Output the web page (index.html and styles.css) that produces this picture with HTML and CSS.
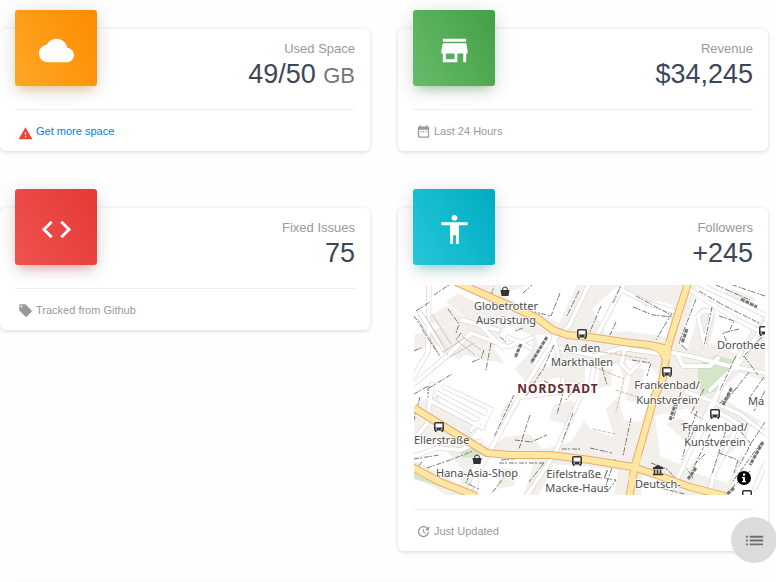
FILE: index.html
```html
<!DOCTYPE html>
<html lang="en">
<head>
<meta charset="utf-8">
<meta name="viewport" content="width=device-width, initial-scale=1">
<title>Dashboard</title>
<link rel="stylesheet" href="styles.css">
</head>
<body>
<main class="page">
  <div class="cards">
    <article class="card">
      <header class="card-header">
        <div class="tile tile-orange">
          <svg class="tile-icon" viewBox="0 0 24 24" aria-hidden="true"><path d="M19.35 10.04C18.67 6.59 15.64 4 12 4 9.11 4 6.6 5.64 5.35 8.04 2.34 8.36 0 10.91 0 14c0 3.31 2.69 6 6 6h13c2.76 0 5-2.24 5-5 0-2.64-2.05-4.78-4.65-4.96z"/></svg>
        </div>
        <div class="stat">
          <p class="category">Used Space</p>
          <h3 class="value">49/50 <small>GB</small></h3>
        </div>
      </header>
      <footer class="card-footer">
        <svg class="foot-icon warning" viewBox="0 0 24 24" aria-hidden="true"><path d="M1 21h22L12 2 1 21zm12-3h-2v-2h2v2zm0-4h-2v-4h2v4z"/></svg>
        <a href="#space">Get more space</a>
      </footer>
    </article>

    <article class="card">
      <header class="card-header">
        <div class="tile tile-green">
          <svg class="tile-icon" viewBox="0 0 24 24" aria-hidden="true"><path d="M20 4H4v2h16V4zm1 10v-2l-1-5H4l-1 5v2h1v6h10v-6h4v6h2v-6h1zm-9 4H6v-4h6v4z"/></svg>
        </div>
        <div class="stat">
          <p class="category">Revenue</p>
          <h3 class="value">$34,245</h3>
        </div>
      </header>
      <footer class="card-footer">
        <svg class="foot-icon" viewBox="0 0 24 24" aria-hidden="true"><path d="M9 11H7v2h2v-2zm4 0h-2v2h2v-2zm4 0h-2v2h2v-2zm2-7h-1V2h-2v2H8V2H6v2H5c-1.11 0-1.99.9-1.99 2L3 20c0 1.1.89 2 2 2h14c1.1 0 2-.9 2-2V6c0-1.1-.9-2-2-2zm0 16H5V9h14v11z"/></svg>
        <span>Last 24 Hours</span>
      </footer>
    </article>

    <article class="card">
      <header class="card-header">
        <div class="tile tile-red">
          <svg class="tile-icon" viewBox="0 0 24 24" aria-hidden="true"><path d="M9.4 16.6L4.8 12l4.600-4.600L8 6l-6 6 6 6 1.400-1.400zm5.200 0l4.600-4.600-4.600-4.600L16 6l6 6-6 6-1.400-1.400z"/></svg>
        </div>
        <div class="stat">
          <p class="category">Fixed Issues</p>
          <h3 class="value">75</h3>
        </div>
      </header>
      <footer class="card-footer">
        <svg class="foot-icon" viewBox="0 0 24 24" aria-hidden="true"><path d="M21.410 11.580l-9-9C12.050 2.220 11.550 2 11 2H4c-1.100 0-2 .9-2 2v7c0 .55.22 1.050.59 1.420l9 9c.36.36.86.58 1.410.58.55 0 1.050-.22 1.410-.59l7-7c.37-.36.59-.86.59-1.410 0-.55-.23-1.060-.59-1.420zM5.500 7C4.670 7 4 6.330 4 5.500S4.670 4 5.500 4 7 4.670 7 5.500 6.330 7 5.500 7z"/></svg>
        <span>Tracked from Github</span>
      </footer>
    </article>

    <article class="card">
      <header class="card-header">
        <div class="tile tile-cyan">
          <svg class="tile-icon" viewBox="0 0 24 24" aria-hidden="true"><path d="M12 2c1.100 0 2 .9 2 2s-.9 2-2 2-2-.9-2-2 .9-2 2-2zm9 7h-6v13h-2v-6h-2v6H9V9H3V7h18v2z"/></svg>
        </div>
        <div class="stat">
          <p class="category">Followers</p>
          <h3 class="value">+245</h3>
        </div>
      </header>
      <div class="map-frame">
        <svg class="map" viewBox="0 0 351 210" role="img" aria-label="Street map of Nordstadt">
          <defs>
            <g id="bus"><path d="M-3.500-5h7q1.500 0 1.500 1.500v7h-1V5H2.500V3.500h-5V5H-4V3.500h-1v-7Q-5-5-3.500-5z" fill="#333"/><path d="M-3.500-3.500h7V.5h-7z" fill="#fff"/><path d="M-3.500 1.500h1.500v1h-1.500zM2 1.500h1.500v1H2z" fill="#fff"/></g>
            <g id="basket"><path d="M-4.500-1h9L3.500 5h-7z" fill="#333"/><path d="M-2.500-1q0-3 2.500-3t2.500 3" fill="none" stroke="#333"/></g>
            <path id="streets" d="M175-1l-20 42-14 12-31 50-35 65-23 43M6 28l28 42 23-22 37 14 24-9M34 70L0 99M84 45L48 35M65 39l23 23M94 52l23 11M139 47l6 28M210-1l-28 53M208 5l28 14 23 7M285-1l66 31M275 4l16 11 29 18 31 16M255 67l26 5 34 9 36 7M264 71l5 10h27l8-8M291 62l-7-31q6-8 14-4l-8 31M327 67l-31 54-28 63-13 26M351 38l-24 38-31 29M351 148l-25-19-33-15-21-7M310 92l-15 39-12 25M166 113l-25 55-25 38-4 5M0 171l24-8 23 2 19-9M73 168l-10 22-2 20M146 63l35 8 27-8 39 6M211 63l-4 16 9 9 8-8M15-1L14 67 0 91M18 99l-5 40L0 154M15 115l54 28M23 108l47 25-13 12M30 102l47 22-9 18M41 148l12 5M117 100l-9 12 39-5 2-13M323 142l-23 47-5 21M351 180l-10 23M306 128l24 14M180 82l-4 23"/>
          </defs>
          <rect width="351" height="210" fill="#f3f0ec"/>

          <!-- open ground and blocks -->
          <g fill="#fff">
            <path d="M0 0h40l32 15-14 10-16 14-32 8-10 3z"/>
            <path d="M88 10l25-10h50l-18 38-24-12z"/>
            <path d="M0 66l25-6 14 10 9 8-15 28-33 14z"/>
            <path d="M50 70l47 10 18 20 30-8 10 22-18 28-10 12-26-11-23 20-20-11 16-19-39-18-8-20z"/>
            <path d="M92 40l25 10 2 14-22 24-17-25z"/>
            <path d="M122 50l18 0 5 8-10 24-17 2 7-18z"/>
            <path d="M178 24l24-22 20 8 9 12 13-6 15 4-5 32-42-6-20 2z"/>
            <path d="M283 0h68v30l-15 16-11 24-29-12 6-28-15-8-13 41-8-4z"/>
            <path d="M300 42l16-6 13 9-4 14-14-3z"/>
            <path d="M171 76l35 4 5 24-19 20 8 28-24-8-14-22 9-24z"/>
            <path d="M211 75l25 4 8 12-16 46-18-2-7-29 12-18z"/>
            <path d="M120 112l46-5 8 22-17 28-28 7-13-15-24 3z"/>
            <path d="M78 126l26-22 10 14-22 30-13 8z"/>
            <path d="M241 131l34-8 16 10-2 30-14 20-29-12z"/>
            <path d="M303 108l23-20 25 8v42l-28-16z"/>
            <path d="M289 132l29 0 16 22-20 44-33-10z"/>
            <path d="M66 170l54 6-10 34H65l-9-22z"/>
            <path d="M0 155l34 12 16 20-5 12-45-24z"/>
            <path d="M140 179l64 6-4 25h-75z"/>
            <path d="M228 190l28 9 6 11h-35z"/>
            <path d="M335 143l16-8v75h-33z"/>
            <path d="M0 192l23 12 8 6H0z"/>
            <path d="M24 104l18-14 46 8 10 12-22 34-50-24z"/>
          </g>
          <g fill="#f3f0ec">
            <path d="M11 35l22-15 20 15-25 7zM44 8l24 13-16 12-20-16zM94 116l12 2-11 17-10-4zM185 83l14 1-2 17-13 2zM218 82l13 2-7 34-12-3zM139 120l18-5 8 9-13 15-17-4zM304 10l14-6 24 9-7 12zM308 151l13-3 3 13-17 16zM252 139l15-6 13 7-10 15zM88 183l16 1-4 17-18 3z"/>
          </g>

          <!-- green spaces -->
          <g fill="#d3e6c8">
            <path d="M292 83l13-6 10 7-8 21-19 5-2-7zM300 70l20 5-11 21-17-11z"/>
            <path d="M45 162l19-3 9 8-12 5-13 1zM0 185l32 18-32-9zM284 80l12-7 0 22-12 5z"/>
          </g>

          <!-- minor streets -->
          <g fill="none" stroke-linecap="round" stroke-linejoin="round">
            <use href="#streets" stroke="#cfcdca" stroke-width="5"/>
            <use href="#streets" stroke="#fff" stroke-width="4"/>
            <path d="M4 34l22 37M12 32l22 38M18 29l19 30M42 55l19 15M49 52l18 13M29 67l22-14M36 72l24-14" stroke="#c7c5c3"/>
            <path d="M181 66l52 8M180 82l30 12-8 33M179 144l22 5M202 105l28 9" stroke="#d9b9a5" stroke-dasharray="3 2"/>
          </g>

          <!-- building edges -->
          <g class="edges">
            <path d="M2 26l14-9M20 10l15-10M0 31l9 13M8 44l17 26M0 66l9-4M34 24l11 15-3 9M47 48l-6 8M58 77l10-4M70 65l-3 9M0 109l14-8M14 101v11M77 58l-5 27M86 52l6 5M109 43l-8 3M77 11l3-10M109 8l9-8M146 8l-9 23-16-4M165 6l-12 25M140 60l-12 27M127 87l-15 24M100 110l-20 42M116 130l-11 34M130 96l20 9-7 24M101 155l16 2 16-7M148 164l20 0M87 175l45-4M85 178h46M94 187l-16 21M130 178l-15 19M0 174l25-4M13 183l23-8 23-9M34 185l-12 9 12 5M8 177l-7 8M55 191l-3 7 13 6M187 21l-12 28M176 51l36 4 34 4M202 37l-6 13M199 18l8-17M219 22l20 8 19 2M222 11l35 19M258 28l-16 27M218 75l19 3-4 13M176 163l22 5M217 133l-8 38M235 123l-12 47"/>
            <path d="M282 14l-17 44 8 7M298 22l-8 40M305 31l15 5-6 13M325 44l-16 4 5 12M285 6l24 14 38 19M302 0l34 15M351 11l-35-12M348 52l-19 20M322 71l-16 34M335 87l-26 33M350 92l-14 20M324 102l-19 17M351 106l-11 20M267 107l-8 28M290 104l-13 24 12 6M283 126l-10 29-5 20M296 149l-18 37M312 145l-14 44M327 147l10 12-12 22M347 158l-28 38M336 186l-18 17M237 178l16 6 11 12M222 198l-9 12M246 203l25 6M279 193l-6-9M305 168l19 7-4 13M267 139l15 2-7 14M351 137l-17 26M201 174l-10 29M180 192l22 3-9 12M291 169l-9 9M330 71l14 19M6 112l-6 23M15 103l23-14M159 128l-11 29M188 82l5 18M165 98l-13 17"/>
          </g>
          <g fill="none" stroke="#777" stroke-width="3" stroke-dasharray="4 1">
            <path d="M107 59l-6 14M133 52l-16 26M273 44l-5 14M262 117l-6 18M349 157l-13 23M320 203l-8 7M309 120l9-18M282 183l-8 11M327 14l16 8"/>
          </g>

          <!-- main roads -->
          <g fill="none" stroke-linejoin="round">
            <g stroke="#e6ad72" stroke-width="8">
              <path d="M42-3L76 12l23 10 24 11 16 12 14 5 23 2 33 5 27 3 18 4"/>
              <path d="M0 123l39 24 34 21 23 2h40l40 5 43 7 24 8 33 12 35 9M-2 182l28 15 36 14"/>
              <path d="M274-2l-15 47-5 17-6 35-7 13-15 53-5 17-6 34"/>
            </g>
            <g stroke="#ffe7a1" stroke-width="6">
              <path d="M42-3L76 12l23 10 24 11 16 12 14 5 23 2 33 5 27 3 18 4"/>
              <path d="M0 123l39 24 34 21 23 2h40l40 5 43 7 24 8 33 12 35 9M-2 182l28 15 36 14"/>
              <path d="M274-2l-15 47-5 17-6 35-7 13-15 53-5 17-6 34"/>
            </g>
            <path d="M236 62q12 3 14 13" stroke="#e6ad72" stroke-width="4"/>
            <path d="M236 61q12 3 16 14M254 56v18M225 169q-1 10-9 27" stroke="#ffe7a1" stroke-width="5"/>
          </g>

          <!-- points of interest -->
          <use href="#basket" x="91" y="6"/>
          <use href="#basket" x="63" y="174"/>
          <use href="#bus" x="168" y="49"/>
          <use href="#bus" x="253" y="87"/>
          <use href="#bus" x="301" y="129"/>
          <use href="#bus" x="25" y="142"/>
          <use href="#bus" x="163" y="176"/>
          <use href="#bus" x="350" y="46"/>
          <use href="#bus" x="333" y="210"/>
          <path d="M244 180l5 3v1h-10v-1zM240 185h1v4h-1zM243 185h1v4h-1zM246 185h1v4h-1zM239 189h10v1h-10z" fill="#333" stroke="#333" stroke-width=".5"/>

          <g class="labels">
            <text x="92" y="25">Globetrotter</text>
            <text x="92" y="39">Ausrüstung</text>
            <text x="168" y="67">An den</text>
            <text x="168" y="81">Markthallen</text>
            <text x="253" y="104">Frankenbad/</text>
            <text x="253" y="119">Kunstverein</text>
            <text x="301" y="146">Frankenbad/</text>
            <text x="301" y="161">Kunstverein</text>
            <text x="334" y="120" class="from-left">Ma</text>
            <text x="303" y="64" class="from-left">Dorothee</text>
            <text x="0" y="159" class="from-left">Ellerstraße</text>
            <text x="63" y="192">Hana-Asia-Shop</text>
            <text x="163" y="193">Eifelstraße /</text>
            <text x="163" y="207">Macke-Haus</text>
            <text x="244" y="203">Deutsch-</text>
            <text x="144" y="108" class="district">NORDSTADT</text>
          </g>
          <circle cx="330" cy="193" r="7"/>
          <path d="M328.500 192h2.500v4h1v1.200h-4V196h1v-2.800h-1V192zM329 188.500h2.200v2.200H329z" fill="#fff"/>
        </svg>
      </div>
      <footer class="card-footer">
        <svg class="foot-icon" viewBox="0 0 24 24" aria-hidden="true"><path d="M21 10.120h-6.780l2.740-2.820c-2.730-2.700-7.150-2.800-9.880-.1-2.730 2.710-2.730 7.080 0 9.790 2.730 2.710 7.150 2.710 9.880 0C18.320 15.650 19 14.080 19 12.100h2c0 1.980-.88 4.550-2.640 6.290-3.510 3.480-9.210 3.480-12.720 0-3.500-3.470-3.530-9.110-.02-12.580 3.510-3.470 9.140-3.470 12.650 0L21 3v7.120zM12.500 8v4.250l3.500 2.080-.72 1.210L11 13V8h1.500z"/></svg>
        <span>Just Updated</span>
      </footer>
    </article>
  </div>
  <div class="next-row"></div>
</main>
<button class="fab" type="button" aria-label="Menu">
  <svg viewBox="0 0 24 24" aria-hidden="true"><path d="M3 11h2v2H3zM3 15h2v2H3zM3 7h2v2H3zM7 11h14v2H7zM7 15h14v2H7zM7 7h14v2H7z"/></svg>
</button>
</body>
</html>
```
FILE: styles.css
```css
* {
  box-sizing: border-box;
}

body {
  margin: 0;
  background: #fefefe;
  color: #999;
  font-family: "Liberation Sans", Arial, sans-serif;
}

.page {
  padding: 29px 8px 0 0;
}

.cards {
  display: grid;
  grid-template-columns: repeat(2, minmax(0, 1fr));
  align-items: start;
  gap: 57px 28px;
}

.card {
  background: #fff;
  border-radius: 6px;
  box-shadow: 0 1px 4px rgba(0, 0, 0, 0.16);
}

.card-header {
  display: flex;
  justify-content: space-between;
  padding: 0 15px;
}

.tile {
  display: flex;
  align-items: center;
  justify-content: center;
  width: 82px;
  height: 76px;
  margin-top: -19px;
  padding-top: 5px;
  border-radius: 3px;
}

.tile-icon {
  width: 35px;
  height: 35px;
  fill: #fff;
}

.tile-orange {
  background: linear-gradient(60deg, #ffa726, #fb8c00);
  box-shadow: 0 4px 20px rgba(0, 0, 0, 0.14), 0 7px 10px -5px rgba(255, 152, 0, 0.4);
}

.tile-green {
  background: linear-gradient(60deg, #66bb6a, #43a047);
  box-shadow: 0 4px 20px rgba(0, 0, 0, 0.14), 0 7px 10px -5px rgba(76, 175, 80, 0.4);
}

.tile-red {
  background: linear-gradient(60deg, #ef5350, #e53935);
  box-shadow: 0 4px 20px rgba(0, 0, 0, 0.14), 0 7px 10px -5px rgba(244, 67, 54, 0.4);
}

.tile-cyan {
  background: linear-gradient(60deg, #26c6da, #00acc1);
  box-shadow: 0 4px 20px rgba(0, 0, 0, 0.14), 0 7px 10px -5px rgba(0, 188, 212, 0.4);
}

.stat {
  padding-top: 10px;
  text-align: right;
}

.category {
  margin: 0;
  font-size: 13px;
  line-height: 20px;
}

.value {
  margin: 0;
  color: #3c4858;
  font-size: 27px;
  font-weight: 400;
  line-height: 30px;
}

.value small {
  color: #777;
  font-size: 22px;
  line-height: 1;
}

.card-footer {
  display: flex;
  align-items: center;
  gap: 3px;
  height: 42px;
  margin: 20px 15px 0;
  padding-left: 3px;
  border-top: 1px solid #eee;
  font-size: 11px;
  line-height: 16px;
}

.card-footer a {
  color: #007bff;
  text-decoration: none;
}

.foot-icon {
  width: 15px;
  height: 15px;
  margin-top: 2px;
  fill: #999;
}

.foot-icon.warning {
  margin-top: 6px;
  fill: #f44336;
}

.map-frame {
  margin: 17px 3px -6px 16px;
}

.map {
  display: block;
  width: 100%;
  height: auto;
  overflow: hidden;
}

.edges {
  fill: none;
  stroke: #777;
  stroke-width: 1px;
  stroke-dasharray: 5 1 2 2;
}

.labels {
  fill: #4d4d4d;
  stroke: rgba(255, 255, 255, 0.8);
  stroke-width: 2px;
  stroke-linejoin: round;
  paint-order: stroke;
  font-family: "Noto Sans", sans-serif;
  font-size: 11px;
  text-anchor: middle;
}

.labels .from-left {
  text-anchor: start;
}

.labels .district {
  fill: #622b31;
  font-size: 12px;
  font-weight: 700;
  letter-spacing: 1px;
}

.next-row {
  height: 4px;
  margin: 27px 7px 0 15px;
  background: linear-gradient(#fefefe, #f9f9f9);
}

.fab {
  position: fixed;
  right: -1px;
  bottom: 19px;
  display: flex;
  align-items: center;
  justify-content: center;
  width: 46px;
  height: 46px;
  padding: 0;
  border: 0;
  border-radius: 50%;
  background: #dcdcdc;
}

.fab svg {
  width: 23px;
  height: 23px;
  fill: #707070;
}
```
